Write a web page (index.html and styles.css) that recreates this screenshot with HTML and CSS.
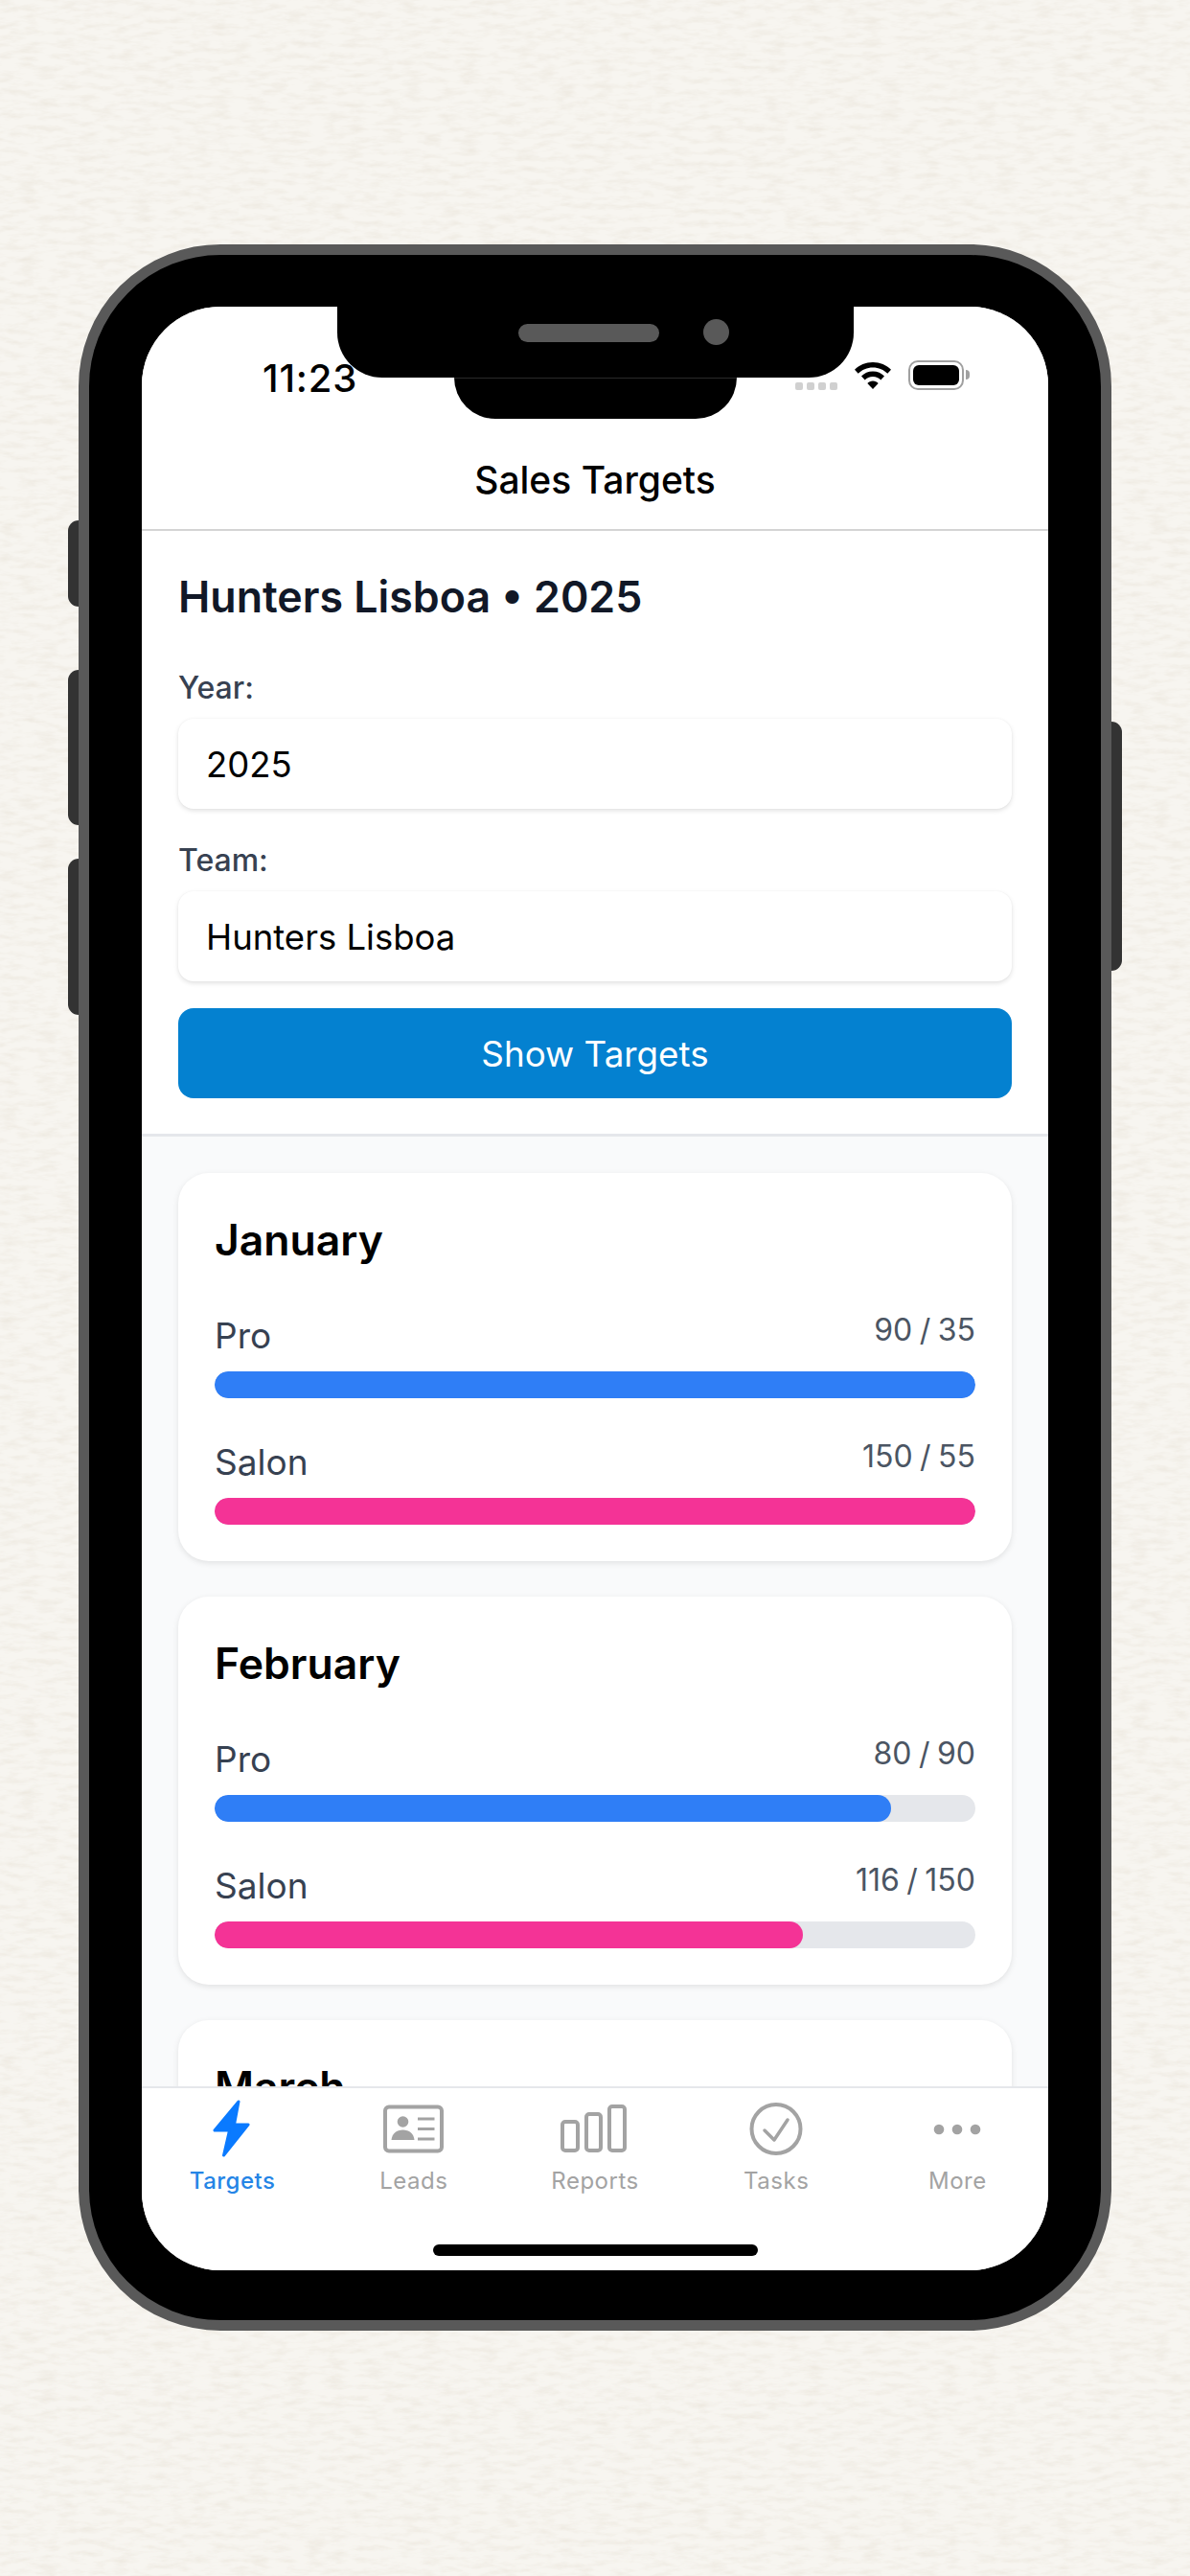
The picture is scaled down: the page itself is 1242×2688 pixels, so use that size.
FILE: index.html
```html
<!DOCTYPE html>
<html lang="en">
<head>
<meta charset="utf-8">
<title>Sales Targets</title>
<link rel="stylesheet" href="styles.css">
</head>
<body>
<svg class="paper" width="1242" height="2688" aria-hidden="true">
  <filter id="grain" x="0" y="0" width="100%" height="100%">
    <feTurbulence type="fractalNoise" baseFrequency="0.05 0.16" numOctaves="4" seed="11"/>
    <feColorMatrix type="matrix" values="0 0 0 0 0.74  0 0 0 0 0.68  0 0 0 0 0.58  0.7 0 0 0 -0.29"/>
  </filter>
  <rect width="1242" height="2688" filter="url(#grain)"/>
</svg>
<div class="phone">
  <span class="side side-mute"></span>
  <span class="side side-up"></span>
  <span class="side side-down"></span>
  <span class="side side-power"></span>
  <div class="notch"><span class="speaker"></span><span class="camera"></span></div>
  <div class="notch-lower"></div>
  <main class="screen">
    <header class="top">
      <div class="status">
        <span class="time">11:23</span>
        <div class="status-icons">
          <span class="signal"><i></i><i></i><i></i><i></i></span>
          <svg class="wifi" width="40" height="32" viewBox="0 0 40 32"><path d="M20 3C12.500 3 5.800 6 1 10.800l3.700 4C8.500 10.900 14 8.500 20 8.500s11.500 2.400 15.300 6.300l3.700-4C34.200 6 27.500 3 20 3z"/><path d="M20 12.500c-4.800 0-9 1.900-12 5l3.700 4c2.100-2.200 5-3.500 8.300-3.500s6.200 1.300 8.300 3.500l3.700-4c-3-3.100-7.200-5-12-5z"/><path d="M20 22.500c-2.300 0-4.300.9-5.700 2.400L20 31l5.700-6.100c-1.400-1.500-3.400-2.400-5.700-2.400z"/></svg>
          <span class="battery"><span class="battery-level"></span></span>
          <span class="battery-nub"></span>
        </div>
      </div>
      <h1 class="nav-title">Sales Targets</h1>
    </header>
    <section class="filters">
      <h2 class="filters-title">Hunters Lisboa • 2025</h2>
      <label class="field-label">Year:</label>
      <div class="select">2025</div>
      <label class="field-label field-label-team">Team:</label>
      <div class="select">Hunters Lisboa</div>
      <button class="show-button" type="button">Show Targets</button>
    </section>
    <div class="months">
      <article class="card">
        <h3 class="month">January</h3>
        <div class="metric">
          <div class="metric-head"><span class="metric-name">Pro</span><span class="metric-value">90 / 35</span></div>
          <div class="track"><div class="fill fill-pro" style="width:100%"></div></div>
        </div>
        <div class="metric">
          <div class="metric-head"><span class="metric-name">Salon</span><span class="metric-value">150 / 55</span></div>
          <div class="track"><div class="fill fill-salon" style="width:100%"></div></div>
        </div>
      </article>
      <article class="card">
        <h3 class="month">February</h3>
        <div class="metric">
          <div class="metric-head"><span class="metric-name">Pro</span><span class="metric-value">80 / 90</span></div>
          <div class="track"><div class="fill fill-pro" style="width:88.9%"></div></div>
        </div>
        <div class="metric">
          <div class="metric-head"><span class="metric-name">Salon</span><span class="metric-value">116 / 150</span></div>
          <div class="track"><div class="fill fill-salon" style="width:77.3%"></div></div>
        </div>
      </article>
      <article class="card">
        <h3 class="month">March</h3>
      </article>
    </div>
    <nav class="tabs">
      <a class="tab tab-active">
        <svg class="tab-icon" width="64" height="64" viewBox="0 0 64 64"><path d="M38 4L13 34H28.500L22.500 60 48 28H33.500z" fill="#0a7aff" stroke="#0a7aff" stroke-width="3" stroke-linejoin="round"/></svg>
        <span>Targets</span>
      </a>
      <a class="tab">
        <svg class="tab-icon" width="64" height="64" viewBox="0 0 64 64"><rect x="2" y="9.500" width="59" height="46" rx="4" fill="none" stroke="#a3a3a3" stroke-width="4"/><circle cx="20.500" cy="25" r="5.800" fill="#a3a3a3"/><path d="M8.500 44c.6-6.500 5.500-10.500 12-10.500s11.400 4 12 10.500z" fill="#a3a3a3"/><path d="M36 22h17.500M36 32.500h17.500M36 43h17.500" stroke="#a3a3a3" stroke-width="3" fill="none"/></svg>
        <span>Leads</span>
      </a>
      <a class="tab">
        <svg class="tab-icon" width="72" height="64" viewBox="0 0 72 64"><g fill="none" stroke="#a3a3a3" stroke-width="4"><rect x="2" y="25" width="16" height="30" rx="3"/><rect x="27" y="17" width="15" height="38" rx="3"/><rect x="51" y="9" width="16" height="46" rx="3"/></g></svg>
        <span>Reports</span>
      </a>
      <a class="tab">
        <svg class="tab-icon" width="64" height="64" viewBox="0 0 64 64"><circle cx="32" cy="32.500" r="25.500" fill="none" stroke="#a3a3a3" stroke-width="4"/><path d="M20 34l10 10 14-21" fill="none" stroke="#a3a3a3" stroke-width="3.500" stroke-linecap="round" stroke-linejoin="round"/></svg>
        <span>Tasks</span>
      </a>
      <a class="tab">
        <svg class="tab-icon" width="64" height="64" viewBox="0 0 64 64"><g fill="#a3a3a3"><circle cx="13" cy="33" r="5.300"/><circle cx="32" cy="33" r="5.300"/><circle cx="51" cy="33" r="5.300"/></g></svg>
        <span>More</span>
      </a>
    </nav>
    <div class="home-area"><span class="home-indicator"></span></div>
  </main>
</div>
</body>
</html>
```
FILE: styles.css
```css
* { box-sizing: border-box; }
html, body { margin: 0; padding: 0; }
body {
  position: relative;
  width: 1242px;
  height: 2688px;
  overflow: hidden;
  padding: 255px 0 0 82px;
  background: #f7f5f0;
  font-family: Inter, "Liberation Sans", sans-serif;
}
.paper { position: absolute; left: 0; top: 0; }

.phone {
  position: relative;
  width: 1078px;
  height: 2177px;
  padding: 54px 55px 52px;
  border: 11px solid #595959;
  border-radius: 148px;
  background: #000;
}
.side { position: absolute; width: 11px; background: #333; }
.side-mute { left: -22px; top: 277px; height: 90px; border-radius: 11px 0 0 11px; }
.side-up { left: -22px; top: 433px; height: 162px; border-radius: 11px 0 0 11px; }
.side-down { left: -22px; top: 630px; height: 163px; border-radius: 11px 0 0 11px; }
.side-power { right: -22px; top: 487px; height: 260px; border-radius: 0 11px 11px 0; }

.notch {
  position: absolute;
  z-index: 3;
  left: 259px;
  top: 0;
  width: 539px;
  height: 128px;
  background: #000;
  border-radius: 0 0 47px 47px;
}
.speaker {
  position: absolute;
  left: 189px;
  top: 72px;
  width: 147px;
  height: 19px;
  border-radius: 10px;
  background: #595959;
}
.camera {
  position: absolute;
  left: 382px;
  top: 67px;
  width: 27px;
  height: 27px;
  border-radius: 50%;
  background: #595959;
}
.notch-lower {
  position: absolute;
  z-index: 2;
  left: 381px;
  top: 128px;
  width: 295px;
  height: 43px;
  background: #000;
  border-top: 1px solid #2a2a2a;
  border-radius: 0 0 44px 44px;
}

.screen {
  display: flex;
  flex-direction: column;
  width: 946px;
  height: 2049px;
  overflow: hidden;
  background: #fff;
  border-radius: 82px;
}

.top { flex: none; height: 234px; border-bottom: 2px solid #d4d4d4; background: #fff; }
.status { display: flex; justify-content: space-between; height: 134px; padding: 52px 82px 0 126px; }
.time { font-size: 40px; line-height: 46px; font-weight: 500; letter-spacing: .8px; color: #000; }
.status-icons { display: flex; align-items: flex-start; padding-top: 5px; }
.signal { display: flex; gap: 4px; margin: 22px 17px 0 0; }
.signal i { display: block; width: 8px; height: 8px; border-radius: 2px; background: #d0d0d0; }
.wifi { display: block; margin: -2px 17px 0 0; fill: #000; }
.battery { display: block; width: 58px; height: 31px; margin-top: -1px; padding: 3px; border: 2px solid #a0a0a0; border-radius: 10px; }
.battery-level { display: block; height: 100%; border-radius: 6px; background: #000; }
.battery-nub { display: block; width: 4px; height: 10px; margin: 9px 0 0 2px; border-radius: 0 5px 5px 0; background: #a0a0a0; }
.nav-title { margin: 0; padding-top: 24px; font-size: 39px; line-height: 46px; font-weight: 500; text-align: center; color: #000; }

.filters { flex: none; height: 632px; padding: 42px 38px 0; background: #fff; border-bottom: 3px solid #e5e7eb; }
.filters-title { margin: 0; font-size: 44.700px; line-height: 54px; font-weight: 600; color: #111827; }
.field-label { display: block; margin-top: 49px; font-size: 32px; line-height: 38px; font-weight: 500; color: #374151; }
.field-label-team { margin-top: 35px; }
.select {
  height: 94px;
  margin-top: 13px;
  padding: 2px 29px 0;
  border-radius: 16px;
  background: #fff;
  box-shadow: 0 2px 5px rgba(0, 0, 0, .12), 0 0 2px rgba(0, 0, 0, .04);
  font-size: 36.500px;
  line-height: 92px;
  color: #000;
}
.show-button {
  display: block;
  width: 100%;
  height: 94px;
  margin-top: 28px;
  border: 0;
  border-radius: 16px;
  background: #0481d0;
  color: #fff;
  font: 400 36.800px Inter, "Liberation Sans", sans-serif;
}

.months { flex: 1; min-height: 0; overflow: hidden; padding: 38px 38px 0; background: #f9fafb; }
.card {
  height: 405px;
  margin-bottom: 37px;
  padding: 43px 38px 38px;
  border-radius: 32px;
  background: #fff;
  box-shadow: 0 2px 6px rgba(0, 0, 0, .1);
}
.month { margin: 0 0 51px; font-size: 44.500px; line-height: 54px; font-weight: 600; color: #000; }
.metric + .metric { margin-top: 45px; }
.metric-head { display: flex; justify-content: space-between; align-items: flex-start; height: 59px; }
.metric-name { font-size: 37px; line-height: 44px; color: #374151; }
.metric-value { margin-top: -4px; font-size: 32px; line-height: 40px; word-spacing: -1.500px; color: #4b5563; }
.track { height: 28px; border-radius: 14px; background: #e5e7eb; overflow: hidden; }
.fill { height: 100%; border-radius: 14px; }
.fill-pro { background: #2f7ef6; }
.fill-salon { background: #f43396; }

.tabs { flex: none; display: grid; grid-template-columns: repeat(5, 1fr); height: 140px; background: #fff; border-top: 2px solid #e5e7eb; }
.tab { display: flex; flex-direction: column; align-items: center; font-size: 24px; line-height: 30px; color: #a3a3a3; letter-spacing: .5px; }
.tab-icon { display: block; margin: 10px 0 8px; }
.tab-active { color: #2585e6; font-weight: 500; }
.home-area { flex: none; height: 52px; padding-top: 25px; background: #fff; display: flex; justify-content: center; }
.home-indicator { display: block; width: 339px; height: 12px; border-radius: 6px; background: #000; }
```
